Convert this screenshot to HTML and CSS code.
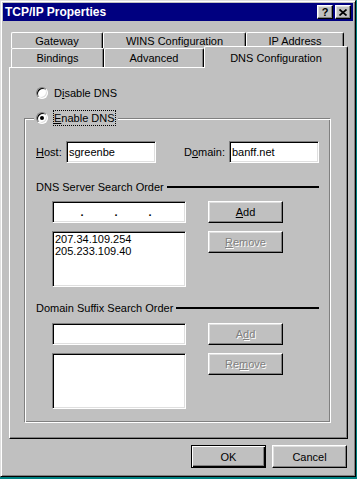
FILE: index.html
```html
<!DOCTYPE html>
<html lang="en">
<head>
    <meta charset="UTF-8">
    <title>TCP/IP Properties</title>
    <link rel="stylesheet" href="styles.css">
</head>
<body>
<div class="window">
    <div class="titlebar">
        <span class="title">TCP/IP Properties</span>
        <div class="title-btns">
            <span class="tbtn">?</span>
            <span class="tbtn">
                <svg width="8" height="7" viewBox="0 0 8 7"><path d="M0.5 0.5 L7.5 6.5 M7.5 0.5 L0.5 6.5" stroke="#000" stroke-width="1.7" fill="none"/></svg>
            </span>
        </div>
    </div>

    <!-- two rows of tabs, the selected row in front -->
    <div class="tabs">
        <div class="tab-row back">
            <div class="tab" style="width:92px">Gateway</div>
            <div class="tab" style="width:143px">WINS Configuration</div>
            <div class="tab" style="width:98px">IP Address</div>
        </div>
        <div class="tab-row front">
            <div class="tab" style="width:93px">Bindings</div>
            <div class="tab" style="width:100px">Advanced</div>
            <div class="tab active" style="width:144px">DNS Configuration</div>
        </div>
    </div>

    <div class="panel">
        <div class="radio-row disable">
            <span class="radio"></span>
            <span class="radio-label">D<u>i</u>sable DNS</span>
        </div>

        <div class="group">
            <div class="radio-row legend">
                <span class="radio checked"></span>
                <span class="radio-label focus"><u>E</u>nable DNS</span>
            </div>

            <div class="host-row">
                <span class="host-label"><u>H</u>ost:</span>
                <div class="field host-field">sgreenbe</div>
                <span class="domain-label">D<u>o</u>main:</span>
                <div class="field host-field">banff.net</div>
            </div>

            <div class="sep-row">
                <span>DNS Server Search Order</span>
                <span class="sep-line"></span>
            </div>
            <div class="order">
                <div class="order-fields">
                    <div class="field ip">
                        <span class="seg first"></span><span class="dot">.</span>
                        <span class="seg"></span><span class="dot">.</span>
                        <span class="seg"></span><span class="dot">.</span>
                        <span class="seg last"></span>
                    </div>
                    <div class="listbox">
                        <div>207.34.109.254</div>
                        <div>205.233.109.40</div>
                    </div>
                </div>
                <div class="order-btns">
                    <div class="btn"><span><u>A</u>dd</span></div>
                    <div class="btn disabled"><span><u>R</u>emove</span></div>
                </div>
            </div>

            <div class="sep-row suffix">
                <span>Domain Suffix Search Order</span>
                <span class="sep-line"></span>
            </div>
            <div class="order second">
                <div class="order-fields">
                    <div class="field"></div>
                    <div class="listbox"></div>
                </div>
                <div class="order-btns">
                    <div class="btn disabled"><span>A<u>d</u>d</span></div>
                    <div class="btn disabled"><span>Re<u>m</u>ove</span></div>
                </div>
            </div>
        </div>
    </div>

    <div class="footer">
        <div class="btn default">OK</div>
        <div class="btn">Cancel</div>
    </div>
</div>
</body>
</html>
```

FILE: styles.css
```css
* {
    box-sizing: border-box;
}
body {
    margin: 0;
    background-color: #008080; /* desktop */
    font-family: "Liberation Sans", Arial, sans-serif;
    font-size: 11px;
    color: #000;
}
u {
    text-decoration-thickness: 1px;
    text-underline-offset: 1px;
}

.window {
    width: 356px;
    height: 477px;
    padding: 2px;
    background-color: #c0c0c0;
    border: 1px solid;
    border-color: #dfdfdf #000 #000 #dfdfdf;
    box-shadow: inset 1px 1px #fff, inset -1px -1px #808080;
}

.titlebar {
    height: 18px;
    padding: 0 2px;
    background-color: #000080;
    color: #fff;
    display: flex;
    align-items: center;
    justify-content: space-between;
}
.title {
    font-size: 12px;
    font-weight: bold;
}
.title-btns {
    display: flex;
    gap: 2px;
}
.tbtn {
    width: 16px;
    height: 14px;
    background-color: #c0c0c0;
    color: #000;
    font-weight: bold;
    font-size: 11px;
    line-height: 1;
    border: 1px solid;
    border-color: #fff #000 #000 #fff;
    box-shadow: inset -1px -1px #808080, inset 1px 1px #dfdfdf;
    display: flex;
    align-items: center;
    justify-content: center;
}

/* tabs */
.tabs {
    margin: 11px 0 0 8px;
}
.tab-row {
    display: flex;
}
.tab-row.back {
    height: 16px;
}
.tab-row.front {
    height: 19px;
    align-items: flex-end;
}
.tab {
    height: 100%;
    display: flex;
    align-items: center;
    justify-content: center;
    background-color: #c0c0c0;
    border-top: 1px solid #fff;
    border-left: 1px solid #fff;
    border-right: 1px solid #000;
    border-radius: 2px 2px 0 0;
    box-shadow: inset -1px 0 #808080;
}
.tab.active {
    position: relative;
    z-index: 1;
    height: 22px;
    margin-bottom: -1px;
}

.panel {
    width: 339px;
    height: 372px;
    margin-left: 6px;
    border: 1px solid;
    border-color: #fff #000 #000 #fff;
    box-shadow: inset -1px -1px #808080;
}

/* radio buttons */
.radio-row {
    display: flex;
    align-items: center;
    height: 16px;
}
.disable {
    margin: 17px 0 0 26px;
}
.radio {
    flex: none;
    width: 12px;
    height: 12px;
    border-radius: 50%;
    background-color: #fff;
    border: 1px solid;
    border-color: #808080 #fff #fff #808080;
    box-shadow: inset 1px 1px #000, inset -1px -1px #dfdfdf;
    display: flex;
    align-items: center;
    justify-content: center;
}
.radio.checked::after {
    content: "";
    width: 4px;
    height: 4px;
    border-radius: 50%;
    background-color: #000;
}
.radio-label {
    margin-left: 6px;
    line-height: 14px;
}
.radio-label.focus {
    margin-left: 5px;
    border: 1px dotted #000;
}

/* group box */
.group {
    width: 307px;
    height: 305px;
    margin: 17px 0 0 14px;
    border: 1px solid;
    border-color: #808080 #fff #fff #808080;
    box-shadow: inset 1px 1px #fff, inset -1px -1px #808080;
}
.legend {
    width: fit-content;
    margin: -9px 0 0 9px;
    padding: 0 2px;
    background-color: #c0c0c0;
}

.host-row {
    display: flex;
    align-items: center;
    height: 22px;
    margin: 15px 0 0 11px;
}
.host-label {
    width: 30px;
}
.domain-label {
    width: 45px;
    margin-left: 28px;
}

.field {
    height: 22px;
    padding: 0 2px;
    background-color: #fff;
    border: 1px solid;
    border-color: #808080 #fff #fff #808080;
    box-shadow: inset 1px 1px #000, inset -1px -1px #dfdfdf;
    display: flex;
    align-items: center;
}
.host-field {
    width: 90px;
}
.field.ip {
    padding: 0 1px;
}
.seg {
    width: 30px;
}
.seg.first {
    width: 26px;
}
.seg.last {
    flex: 1;
}
.dot {
    width: 4px;
    text-align: center;
    font-weight: bold;
}

.sep-row {
    display: flex;
    align-items: center;
    height: 14px;
    margin: 17px 11px 0 11px;
}
.sep-row.suffix {
    margin-top: 14px;
}
.sep-line {
    flex: 1;
    margin-left: 3px;
    border-top: 2px solid #000;
}

.order {
    display: flex;
    gap: 22px;
    margin: 7px 0 0 27px;
}
.order.second {
    margin-top: 8px;
}
.order-fields {
    width: 134px;
    display: flex;
    flex-direction: column;
    gap: 8px;
}
.order-btns {
    width: 75px;
    display: flex;
    flex-direction: column;
    gap: 8px;
}
.listbox {
    height: 56px;
    padding: 1px 0 0 2px;
    line-height: 12px;
    background-color: #fff;
    border: 1px solid;
    border-color: #808080 #fff #fff #808080;
    box-shadow: inset 1px 1px #000, inset -1px -1px #dfdfdf;
}

/* push buttons */
.btn {
    height: 22px;
    display: flex;
    align-items: center;
    justify-content: center;
    border: 1px solid;
    border-color: #fff #000 #000 #fff;
    box-shadow: inset -1px -1px #808080, inset 1px 1px #dfdfdf;
}
.btn.disabled {
    color: #808080;
    text-shadow: 1px 1px 0 #fff;
}
.btn.default {
    border-color: #000;
    box-shadow: inset 1px 1px #fff, inset -1px -1px #000, inset -2px -2px #808080;
}

.footer {
    display: flex;
    justify-content: flex-end;
    gap: 6px;
    margin-top: 6px;
    padding-right: 6px;
}
.footer .btn {
    width: 75px;
    height: 23px;
}
```
